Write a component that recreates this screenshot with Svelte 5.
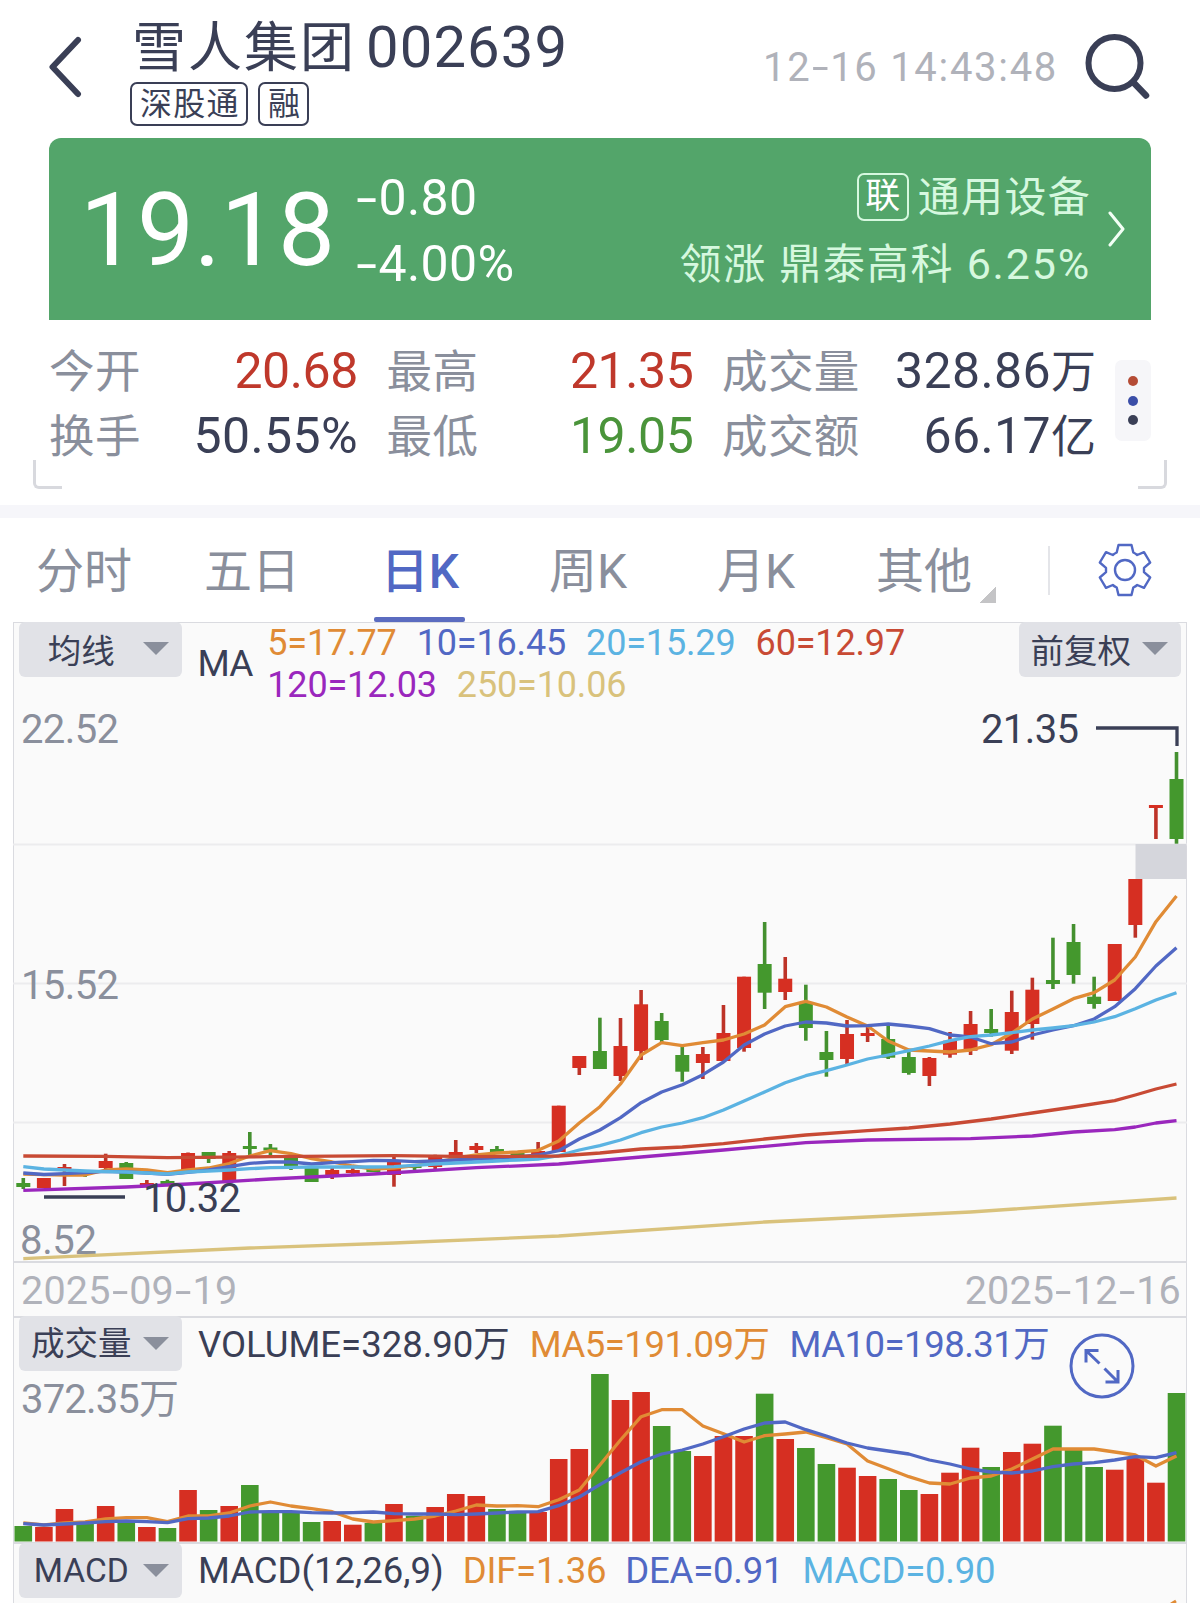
<script lang="ts">
	type Candle = [number, number, number, number, 0 | 1];

	const STEP = 20.593;
	const FIRST = 23.3;
	const cx = (i: number) => FIRST + i * STEP;

	const tabs = ['分时', '五日', '日K', '周K', '月K', '其他'];
	let active = $state(2);

	const stats = [
		{ label: '今开', value: '20.68', tone: 'up' },
		{ label: '最高', value: '21.35', tone: 'up' },
		{ label: '成交量', value: '328.86', unit: '万', tone: '' },
		{ label: '换手', value: '50.55%', tone: '' },
		{ label: '最低', value: '19.05', tone: 'down' },
		{ label: '成交额', value: '66.17', unit: '亿', tone: '' }
	];

	// high, body top, body bottom, low, rising
	const candles: Candle[] = [
		[1178, 1183, 1187, 1189, 0], [1178, 1178, 1188, 1188, 1], [1164, 1167, 1170, 1186, 1], [1171, 1172, 1175, 1177, 0],
		[1153.7, 1161, 1168, 1170, 1], [1162, 1163, 1179, 1179, 0], [1180, 1183, 1186, 1187, 1], [1179.7, 1181, 1184, 1185, 0],
		[1152.5, 1153, 1170, 1170, 1], [1152, 1152, 1159, 1163, 0], [1151, 1153, 1181, 1181, 1], [1132, 1146, 1149, 1156, 0],
		[1144, 1147.5, 1150.5, 1157, 0], [1157, 1157, 1167, 1170, 0], [1168, 1168, 1182, 1182, 0], [1168, 1170, 1175, 1179, 1],
		[1168, 1170, 1173, 1175, 1], [1166, 1168, 1172, 1172, 0], [1156.7, 1161, 1175, 1186.7, 1], [1164, 1166, 1168, 1171, 0],
		[1154.7, 1157, 1167, 1170, 1], [1140, 1152, 1160, 1160, 1], [1143, 1146, 1150, 1153, 1], [1146, 1149, 1153, 1153, 0],
		[1153, 1153, 1157, 1157, 0], [1142, 1151, 1156, 1157, 1], [1105.7, 1105.7, 1152, 1152, 1], [1056, 1056, 1068, 1075, 1],
		[1017.7, 1051, 1069, 1069, 0], [1018, 1046, 1076, 1081, 1], [990, 1004.3, 1051, 1060, 1], [1013, 1021, 1040, 1042, 0],
		[1047, 1055, 1071.7, 1081.7, 0], [1047, 1054, 1063, 1079, 1], [1005, 1033, 1061, 1061, 1], [976.7, 976.7, 1048, 1051.7, 1],
		[922, 964, 992.7, 1009, 0], [957, 978.7, 992, 1000, 1], [984.7, 1003, 1028, 1040.7, 0], [1031, 1052, 1060, 1076.7, 0],
		[1020, 1034, 1059, 1064, 1], [1027, 1033, 1036, 1042, 1], [1024, 1039, 1057.7, 1059, 0], [1051.7, 1057, 1073, 1074.7, 0],
		[1057, 1058, 1076, 1086, 1], [1032, 1040.7, 1054.7, 1057.7, 1], [1011, 1024, 1050.7, 1055, 1], [1009, 1029, 1033, 1036.7, 0],
		[990.7, 1012, 1050.7, 1054, 1], [977.7, 989.7, 1024, 1039.7, 1], [937.7, 980, 984, 989, 0], [924, 942, 975, 983.7, 0],
		[976.7, 996.7, 1004, 1008.7, 0], [944, 944, 1001, 1001, 1], [879, 879, 925, 937.7, 1], [805, 805, 808, 839, 1],
		[752, 779, 839, 843.7, 0]
	];

	const volumes = [
		1526, 1527, 1509, 1524, 1506, 1523, 1527, 1528, 1490, 1510, 1506, 1485, 1512, 1513, 1522, 1521, 1524.7, 1523, 1504,
		1515.7, 1507, 1494, 1496, 1509, 1512.7, 1512, 1459, 1449, 1374, 1400, 1392, 1426, 1451, 1456, 1436, 1436, 1393.7,
		1439, 1448, 1464, 1467.7, 1476, 1479, 1490, 1494, 1472.7, 1447.7, 1467, 1452, 1443.7, 1425.7, 1450, 1467, 1469.7,
		1458, 1482.7, 1393
	];

	const ma5 = [
		1174, 1174.7, 1175, 1175, 1170, 1169, 1170, 1172.7, 1170, 1168, 1163.5, 1156, 1150.7, 1153.7, 1158.7, 1162, 1166,
		1169, 1168, 1165.7, 1162.7, 1158, 1155, 1153, 1152, 1150.3, 1141, 1123, 1106.7, 1084, 1055, 1042.7, 1045.7, 1042.7,
		1040, 1034, 1025, 1006.7, 1001.3, 1007, 1017, 1026, 1041, 1050, 1051, 1052, 1050, 1044.7, 1033, 1019, 1009, 998.7,
		992.7, 980, 957, 921.7, 896
	];
	const ma10 = [
		1173, 1174.5, 1173.7, 1172.5, 1171.3, 1172, 1173, 1174.3, 1172.3, 1170, 1166.7, 1163.3, 1162, 1162, 1164, 1162.7,
		1161.7, 1160.3, 1160.7, 1161.7, 1161, 1160, 1159, 1158, 1157, 1155, 1150.7, 1139, 1130, 1117.7, 1102.7, 1092, 1084.7,
		1074.7, 1062, 1045, 1034, 1026, 1022, 1023, 1026, 1025.7, 1024, 1026, 1028.7, 1035, 1037, 1043.7, 1042, 1035, 1030,
		1025.7, 1019, 1006.7, 988.7, 966, 947.7
	];
	const ma20 = [
		1166.7, 1169, 1170, 1171, 1171.7, 1172, 1173, 1174, 1172, 1171, 1170, 1168.7, 1167.7, 1167.3, 1167, 1167, 1167,
		1167, 1166.7, 1165.3, 1164, 1163, 1162, 1161, 1160, 1159, 1155.5, 1150, 1145.7, 1140, 1132.7, 1127, 1123, 1117.7,
		1110, 1101, 1092, 1082.7, 1075.7, 1070.7, 1065, 1059, 1055, 1050.7, 1046, 1040.7, 1036.7, 1035, 1032.7, 1030, 1028,
		1025.7, 1022, 1016.7, 1008.7, 1000, 992.7
	];
	const volMa5 = [
		1523, 1525, 1523, 1522, 1519, 1517.7, 1517.7, 1521.7, 1516, 1516, 1513, 1506, 1502, 1506, 1508.7, 1511.7, 1519, 1522,
		1520.7, 1519, 1516, 1511, 1505, 1506, 1505.7, 1506.7, 1499.7, 1490, 1465, 1440, 1416.7, 1409.7, 1409.7, 1426, 1433.7,
		1442, 1435.7, 1434, 1432, 1437.7, 1444, 1461, 1468.7, 1476.7, 1483, 1484, 1478, 1476, 1469, 1459, 1449, 1449, 1449,
		1452, 1455, 1466, 1456
	];
	const volMa10 = [
		1523.7, 1525, 1524, 1523, 1521.7, 1521, 1521.7, 1522.7, 1518.7, 1518, 1516, 1512, 1511.7, 1511.7, 1512.7, 1513, 1512.7,
		1512, 1513.7, 1514, 1514, 1514.7, 1514, 1513, 1512, 1511.7, 1505.7, 1497, 1484.7, 1472.7, 1461.7, 1454, 1450, 1444,
		1436.7, 1429, 1423, 1422, 1429.7, 1436, 1443, 1448, 1451, 1454, 1460, 1464, 1469, 1472, 1473, 1471, 1466.7, 1464,
		1462.7, 1460, 1456.7, 1457.7, 1452.7
	];

	// slow averages only need a few knots: [index, y]
	const ma60 = [
		[0, 1156], [4, 1156.3], [7, 1157.7], [12, 1156.7], [18, 1155.7], [22, 1156.7], [26, 1156], [28, 1153], [30, 1149],
		[32, 1147], [34, 1143.7], [36, 1139], [38, 1135], [41, 1130.7], [43, 1128], [45, 1124], [47, 1119], [49, 1113],
		[51, 1107], [53, 1100.7], [54, 1095], [55, 1089], [56, 1084]
	];
	const ma120 = [
		[0, 1190.3], [5, 1187], [8, 1184], [12, 1179], [17, 1174], [22, 1167.7], [26, 1164], [30, 1157], [34, 1150],
		[38, 1142.7], [41, 1140], [46, 1138.7], [49, 1136], [51, 1132], [53, 1129.7], [54, 1127], [55, 1123], [56, 1120.7]
	];
	const ma250 = [[0, 1258.7], [11, 1248], [18, 1243], [26, 1236], [36, 1222], [46, 1212], [56, 1198]];

	const line = (ys: number[]) => ys.map((y, i) => `${cx(i).toFixed(1)},${y}`).join(' ');
	const knots = (pts: number[][]) => pts.map(([i, y]) => `${cx(i).toFixed(1)},${y}`).join(' ');

	const priceLines = [
		{ color: '#d9c27c', points: knots(ma250) },
		{ color: '#e08b35', points: line(ma5) },
		{ color: '#5168c4', points: line(ma10) },
		{ color: '#5bb3e2', points: line(ma20) },
		{ color: '#c84a34', points: knots(ma60) },
		{ color: '#9a27bd', points: knots(ma120) }
	];

	const fill = (rising: number) => (rising ? '#d62f22' : '#44982d');
	const stroke = (rising: number) => (rising ? '#bd3328' : '#44902f');
</script>

{#snippet picker(text: string)}
	<button class="picker"><span>{text}</span><i></i></button>
{/snippet}

<!-- Roboto's hyphen is narrow next to its figures, so it gets a wider box -->
{#snippet dashed(text: string)}
	{#each text.split('-') as part, i}{#if i > 0}<span class="dash">-</span>{/if}{part}{/each}
{/snippet}

<div class="page">
	<header>
		<svg class="back" width="36" height="62" viewBox="0 0 36 62">
			<path d="M30 4 4.500 31 30 58" fill="none" stroke="#3a3f56" stroke-width="6" stroke-linecap="round" stroke-linejoin="round" />
		</svg>
		<div class="name">
			<h1>雪人集团<span>002639</span></h1>
			<div class="tags"><span>深股通</span><span>融</span></div>
		</div>
		<time>{@render dashed('12-16 14:43:48')}</time>
		<svg class="search" width="68" height="68" viewBox="0 0 68 68">
			<circle cx="31.500" cy="31" r="26" fill="none" stroke="#3a3f56" stroke-width="6" />
			<path d="M50 50 63 63.500" stroke="#3a3f56" stroke-width="6.500" stroke-linecap="round" />
		</svg>
	</header>

	<section class="quote">
		<div class="price">19.18</div>
		<div class="change">
			<div>{@render dashed('-0.80')}</div>
			<div>{@render dashed('-4.00%')}</div>
		</div>
		<div class="sector">
			<div><em>联</em>通用设备</div>
			<div class="leader">领涨 鼎泰高科 <b>6.25%</b></div>
		</div>
		<svg width="20" height="36" viewBox="0 0 20 36">
			<path d="M3 2 16 18 3 34" fill="none" stroke="#f2fff5" stroke-width="3" stroke-linecap="round" stroke-linejoin="round" />
		</svg>
	</section>

	<section class="stats">
		<div class="grid">
			{#each stats as s}
				<div class="stat">
					<span class="label">{s.label}</span>
					<span class="value {s.tone}">{s.value}{#if s.unit}<small>{s.unit}</small>{/if}</span>
				</div>
			{/each}
		</div>
		<div class="more"><i class="r"></i><i class="b"></i><i class="k"></i></div>
		<span class="corner left"></span>
		<span class="corner right"></span>
	</section>

	<nav>
		{#each tabs as tab, i}
			<button class="tab" class:active={active === i} onclick={() => (active = i)}>{tab}</button>
		{/each}
		<span class="fold"></span>
		<span class="rule"></span>
		<svg class="gear" width="58" height="58" viewBox="-29 -29 58 58" fill="none" stroke="#5168c4" stroke-width="2.400" stroke-linejoin="round">
			<path d="M-6.500 -25H6.500L8.300 -17.500Q10.500 -16.500 12.200 -15L19 -17.800 25.200 -7.500 19 -2.200V2.200L25.200 7.500 19 17.800 12.200 15Q10.500 16.500 8.300 17.500L6.500 25H-6.500L-8.300 17.500Q-10.500 16.500 -12.200 15L-19 17.800 -25.200 7.500 -19 2.200V-2.200L-25.200 -7.500 -19 -17.800 -12.200 -15Q-10.500 -16.500 -8.300 -17.500Z" />
			<circle r="10" />
		</svg>
	</nav>

	<main>
		<div class="legend ma">
			{@render picker('均线')}
			<span class="title">MA</span>
			<div class="values">
				<div><span class="c5">5=17.77</span><span class="c10">10=16.45</span><span class="c20">20=15.29</span><span class="c60">60=12.97</span></div>
				<div><span class="c120">120=12.03</span><span class="c250">250=10.06</span></div>
			</div>
			{@render picker('前复权')}
		</div>

		<svg class="plot" width="1174" height="556" viewBox="13 705 1174 556">
			{#each [844.5, 983.5, 1122.5] as y}
				<line x1="13" x2="1187" y1={y} y2={y} stroke="#ececee" stroke-width="2" />
			{/each}
			<rect x="1135.500" y="844" width="51" height="35" fill="#d5d6dc" />

			{#each candles as [high, top, bottom, low, rising], i}
				<line x1={cx(i)} x2={cx(i)} y1={high} y2={low} stroke={stroke(rising)} stroke-width="3.600" />
				<rect x={cx(i) - 7} y={top} width="14" height={bottom - top} fill={fill(rising)} />
			{/each}

			<g class="axis">
				<text x="21" y="742.500" textLength="98">22.52</text>
				<text x="21" y="998.500" textLength="98">15.52</text>
				<text x="20" y="1254" textLength="77">8.52</text>
			</g>

			{#each priceLines as l}
				<polyline points={l.points} fill="none" stroke={l.color} stroke-width="3.300" stroke-linejoin="round" />
			{/each}

			<g class="mark">
				<text x="981" y="742.500" textLength="98">21.35</text>
				<polyline points="1096,728 1177,728 1177,746" />
				<text x="143" y="1211.500" textLength="98">10.32</text>
				<line x1="44" x2="125" y1="1197" y2="1197" />
			</g>
		</svg>

		<div class="dates">
			<span>{@render dashed('2025-09-19')}</span>
			<span>{@render dashed('2025-12-16')}</span>
		</div>

		<div class="legend volume">
			{@render picker('成交量')}
			<span>VOLUME=328.90万</span>
			<span class="c5">MA5=191.09万</span>
			<span class="c10">MA10=198.31万</span>
			<svg class="expand" width="68" height="68" viewBox="-34 -34 68 68" fill="none" stroke="#5168c4" stroke-width="3">
				<circle r="31" />
				<path d="M-2.500 -2.500-16 -15.500M-16 -3.500V-15.500H-3.500M2.500 2.500 16 16M16 4V16H3.500" />
			</svg>
		</div>

		<svg class="plot" width="1174" height="170" viewBox="13 1372 1174 170">
			<g class="axis"><text x="21" y="1412.500" textLength="158">372.35万</text></g>
			{#each volumes as top, i}
				<rect x={cx(i) - 8.8} y={top} width="17.600" height={1541.5 - top} fill={fill(candles[i][4])} />
			{/each}
			<polyline points={line(volMa5)} fill="none" stroke="#e08b35" stroke-width="3.300" stroke-linejoin="round" />
			<polyline points={line(volMa10)} fill="none" stroke="#5168c4" stroke-width="3.300" stroke-linejoin="round" />
		</svg>

		<div class="legend macd">
			{@render picker('MACD')}
			<span>MACD(12,26,9)</span>
			<span class="c5">DIF=1.36</span>
			<span class="c10">DEA=0.91</span>
			<span class="c20">MACD=0.90</span>
		</div>
		<svg class="plot" width="1174" height="5" viewBox="13 1598 1174 5">
			<path d="M1171 1604 1176 1601" stroke="#e08b35" stroke-width="3" />
		</svg>
	</main>
</div>

<style>
	:global(body) {
		background: #fff;
	}

	.page {
		width: 1200px;
		height: 1603px;
		overflow: hidden;
		color: #3a3f56;
		font-family: Roboto, 'Noto Sans CJK SC', sans-serif;
		white-space: nowrap;
	}

	svg {
		display: block;
		flex: none;
	}

	button {
		border: 0;
		padding: 0;
		background: none;
		color: inherit;
		font: inherit;
	}

	.dash {
		display: inline-block;
		width: 0.47em;
		letter-spacing: 0;
		text-align: center;
		transform: scaleX(1.5);
	}

	header {
		display: flex;
		height: 138px;
	}

	.back {
		margin: 36px 0 0 48px;
	}

	.name {
		margin: 17px 0 0 46px;
	}

	h1 {
		margin: 0 0 3px 2px;
		font-size: 54px;
		font-weight: 400;
		line-height: 60px;
		letter-spacing: 2px;
	}

	h1 span {
		margin-left: 10px;
		font-size: 58px;
		letter-spacing: 1.1px;
	}

	.tags {
		display: flex;
		gap: 10px;
		font-size: 32px;
		letter-spacing: 1.3px;
		line-height: 40px;
	}

	.tags span {
		border: 2px solid #3a3f56;
		border-radius: 7px;
		padding: 0 6px 0 8px;
	}

	time {
		margin: 41px 25px 0 auto;
		color: #b0b2ba;
		font-size: 40px;
		line-height: 54px;
		letter-spacing: 1.7px;
	}

	.search {
		margin: 32px 49px 0 0;
	}

	.quote {
		display: flex;
		align-items: center;
		box-sizing: border-box;
		height: 182px;
		margin: 0 49px;
		padding: 4px 24px 0 31px;
		border-radius: 12px 12px 0 0;
		background: #53a56a;
		color: #fff;
	}

	.price {
		width: 275px;
		font-size: 101.5px;
		line-height: 120px;
	}

	.change {
		font-size: 50px;
		line-height: 66px;
		letter-spacing: 0.4px;
	}

	.sector {
		margin-left: auto;
		color: #d6f8df;
		font-size: 42px;
		line-height: 66px;
		letter-spacing: 1.3px;
		text-align: right;
	}

	.leader {
		letter-spacing: 1.8px;
	}

	.sector b {
		font-size: 43px;
		font-weight: 400;
	}

	.sector em {
		display: inline-block;
		box-sizing: border-box;
		width: 52px;
		height: 48px;
		margin-right: 9px;
		border: 2px solid #d6f8df;
		border-radius: 7px;
		color: #fff;
		font-size: 35px;
		font-style: normal;
		line-height: 44px;
		letter-spacing: 0;
		text-align: center;
		vertical-align: 4px;
	}

	.quote svg {
		margin: 0 0 4px 16px;
	}

	.stats {
		position: relative;
		display: flex;
		box-sizing: border-box;
		height: 198px;
		padding: 18.5px 49px 0;
		border-bottom: 13px solid #f6f6fa;
	}

	.grid {
		display: grid;
		grid-template-columns: 309px 307px 374px;
		grid-auto-rows: 65px;
		column-gap: 28.5px;
	}

	.stat {
		display: flex;
		align-items: baseline;
		justify-content: space-between;
		line-height: 65px;
	}

	.label {
		color: #8a8f9c;
		font-size: 45.5px;
		letter-spacing: 0.4px;
	}

	.value {
		font-size: 50px;
		letter-spacing: 0.4px;
	}

	.value small {
		font-size: 45px;
		line-height: 1;
		letter-spacing: 0;
	}

	.up,
	.down {
		letter-spacing: -0.4px;
	}

	.up {
		color: #bf382b;
	}

	.down {
		color: #4a943a;
	}

	.more {
		display: flex;
		flex-direction: column;
		align-items: center;
		justify-content: center;
		gap: 9.5px;
		width: 36px;
		height: 81px;
		margin: 21.5px 0 0 auto;
		border-radius: 7px;
		background: #f6f6f9;
	}

	.more i {
		width: 10px;
		height: 10px;
		border-radius: 50%;
	}

	.r {
		background: #b54c36;
	}

	.b {
		background: #3b4ea8;
	}

	.k {
		background: #3a3f56;
	}

	.corner {
		position: absolute;
		top: 140px;
		width: 26px;
		height: 26px;
		border: solid #d8d9de;
		border-width: 0 0 3px 3px;
		border-radius: 0 0 0 6px;
	}

	.left {
		left: 33px;
	}

	.right {
		right: 33px;
		border-width: 0 3px 3px 0;
		border-radius: 0 0 6px;
	}

	nav {
		position: relative;
		display: flex;
		align-items: center;
		height: 104px;
	}

	.tab {
		position: relative;
		width: 168px;
		height: 104px;
		padding-top: 4px;
		color: #8a8f9c;
		font-size: 48px;
		line-height: 98px;
	}

	.active {
		color: #5168c4;
		font-weight: 500;
	}

	.active::after {
		content: '';
		position: absolute;
		bottom: 0;
		left: 38px;
		width: 91px;
		height: 5px;
		border-radius: 2px;
		background: #5b6cc0;
	}

	.fold {
		position: absolute;
		left: 980px;
		top: 69px;
		width: 16px;
		height: 16px;
		background: linear-gradient(135deg, transparent 50%, #c4c4c6 50%);
	}

	.rule {
		width: 2px;
		height: 49px;
		margin-left: 40px;
		background: #e4e5e9;
	}

	.gear {
		margin: 0 0 0 46px;
	}

	main {
		box-sizing: border-box;
		width: 1174px;
		margin-left: 13px;
		background: #fafafa;
		box-shadow: inset 1px 1px #dadbe0, inset -1px 0 #dadbe0;
	}

	.legend {
		position: relative;
		display: flex;
		align-items: flex-start;
		box-sizing: border-box;
		padding: 0 6px;
		font-size: 36.5px;
	}

	.picker {
		display: flex;
		align-items: center;
		box-sizing: border-box;
		width: 162.5px;
		height: 55px;
		padding: 0 13px 3px 1px;
		border-radius: 6px;
		background: #e1e2e7;
		font-size: 33.5px;
	}

	.picker span {
		flex: 1;
	}

	.picker i {
		border: solid transparent;
		border-width: 13px 13px 0;
		border-top-color: #8a8f9c;
	}

	.ma {
		height: 83px;
	}

	.title {
		margin: 22px 0 0 16px;
		font-size: 37px;
		line-height: 40px;
		letter-spacing: -1px;
	}

	.values {
		flex: 1;
		margin: -0.5px 0 0 15px;
		font-size: 36px;
		line-height: 42px;
		letter-spacing: -0.15px;
	}

	.values span {
		margin-right: 20px;
	}

	.c5 {
		color: #e08b35;
	}

	.c10 {
		color: #5168c4;
	}

	.c20 {
		color: #5bb3e2;
	}

	.c60 {
		color: #c84a34;
	}

	.c120 {
		color: #9a27bd;
	}

	.c250 {
		color: #d9c27c;
	}

	.axis,
	.mark {
		fill: #8a8f9c;
		font-size: 40px;
	}

	.mark {
		fill: #3a3f56;
	}

	.mark polyline,
	.mark line {
		fill: none;
		stroke: #3a3f56;
		stroke-width: 3.3;
	}

	.dates {
		display: flex;
		justify-content: space-between;
		box-sizing: border-box;
		height: 55px;
		padding: 0 6px 0 8px;
		border-top: 2px solid #dadbe0;
		color: #b0b2ba;
		font-size: 39.5px;
		line-height: 56px;
		letter-spacing: 0.2px;
	}

	.volume {
		height: 56px;
		box-shadow: inset 0 2px #dadbe0;
		line-height: 58px;
	}

	.volume .picker,
	.macd .picker {
		padding-bottom: 0;
	}

	.volume > span:nth-of-type(1),
	.macd > span:nth-of-type(1) {
		margin-left: 16.5px;
	}

	.legend > .c5,
	.legend > .c10,
	.legend > .c20 {
		margin-left: 20px;
		letter-spacing: -0.5px;
	}

	.macd > .c5,
	.macd > .c10,
	.macd > .c20 {
		margin-left: 19px;
		letter-spacing: -0.2px;
	}

	.expand {
		position: absolute;
		left: 1055px;
		top: 15.5px;
	}

	.macd {
		height: 56px;
		box-shadow: inset 0 2px #dadbe0;
		line-height: 57px;
	}

	.macd .picker {
		margin-top: 1px;
	}
</style>
